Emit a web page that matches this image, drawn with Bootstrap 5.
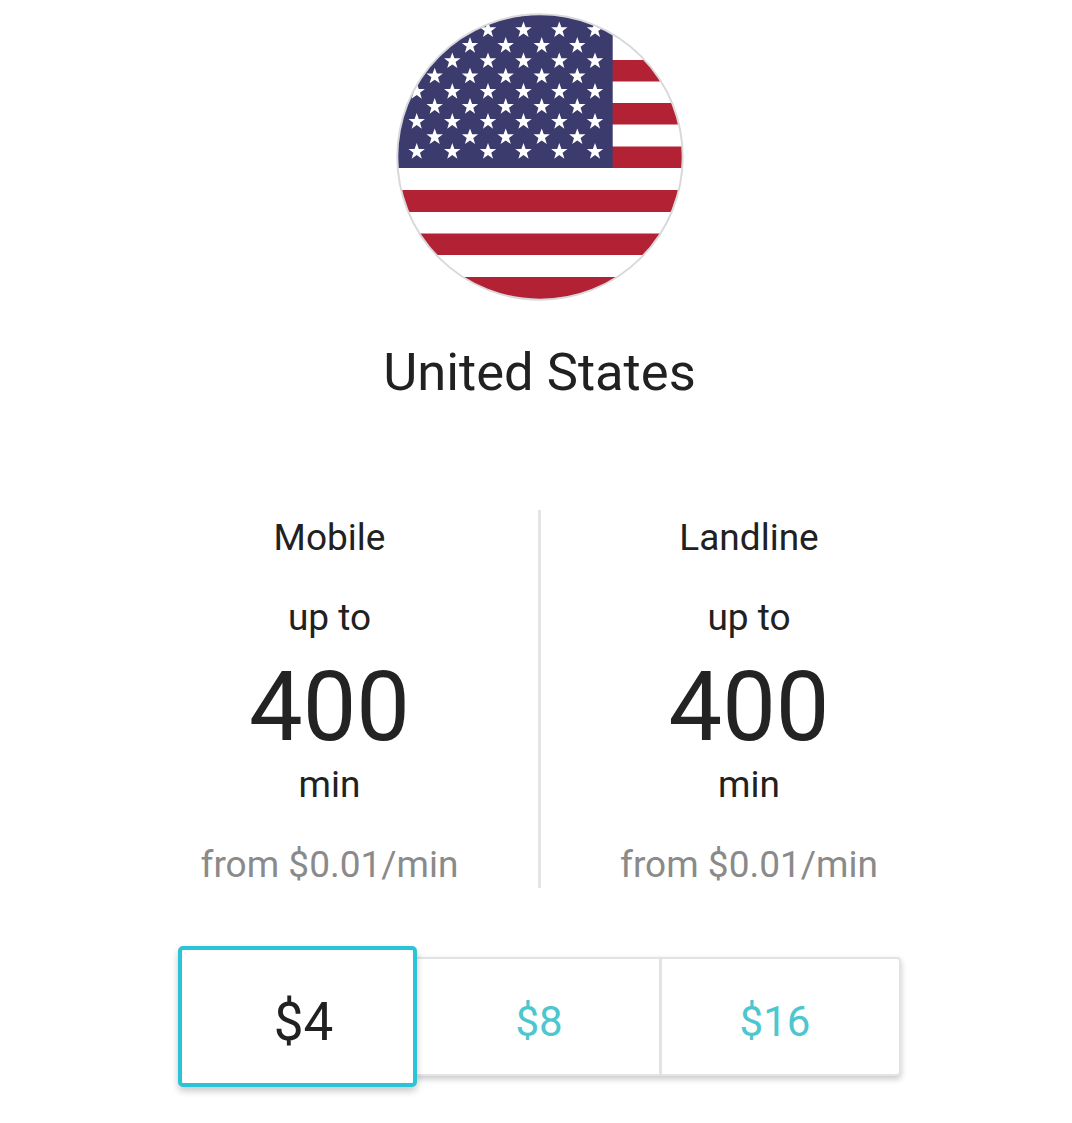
<!DOCTYPE html>
<html lang="en">
<head>
<meta charset="utf-8">
<title>United States</title>
<link href="https://cdn.jsdelivr.net/npm/bootstrap@5.3.0/dist/css/bootstrap.min.css" rel="stylesheet">
<style>
html,body{background:#fff;}
body{font-family:Roboto,"Liberation Sans",sans-serif;color:#212121;width:1072px;height:1123px;overflow:hidden;}
.flag-wrap{padding:13px 0 0 8px;height:301px;}
.flag-svg{display:block;width:288px;height:288px;filter:blur(.35px);}
.country-name{font-size:52.5px;line-height:60px;font-weight:400;margin:41px 0 0;padding-left:7px;}
.rates{margin:108px 0 0 121px;width:840px;height:378px;}
.rate-col{width:416px;flex:none;}
.rate-col-first{border-right:3px solid #e2e4e6;width:420px;}
.rate-type{font-size:37px;line-height:41px;margin-top:7px;}
.rate-upto{font-size:37px;line-height:40px;margin-top:40px;}
.rate-num{font-size:95.5px;line-height:108px;margin-top:15px;color:#232323;}
.rate-min{font-size:37px;line-height:41px;margin-top:3px;}
.rate-from{font-size:37px;line-height:42px;margin-top:39px;color:#8a8a8a;}
.amounts{margin:58px 0 0 178px;width:723px;height:141px;}
.amount-opt{width:239px;height:141px;font-size:53px;color:#212121;background:#fff;border:4.5px solid #2bc4d6;border-radius:5px;box-shadow:0 4px 7px rgba(0,0,0,.22);position:relative;z-index:1;padding:13px 1px 0 13px;flex:none;}
.amount-rest{height:119px;margin:11px 0 0 -2px;background:#fff;border:2px solid #e2e3e6;border-left:0;border-radius:0 4px 4px 0;box-shadow:0 3px 6px rgba(0,0,0,.22);flex:1;}
.amount-btn{flex:1 1 0;font-size:42px;color:#4cc6cf;padding-top:10px;}
.amount-btn+.amount-btn{border-left:3px solid #e2e3e6;padding-right:11px;}
.amount-first{flex:0 0 244px;padding-left:4px;}
</style>
</head>
<body>
<main>
<div class="flag-wrap d-flex justify-content-center">
<svg class="flag-svg" viewBox="396 13 288 288" xmlns="http://www.w3.org/2000/svg" role="img" aria-label="Flag of the United States">
<defs>
<clipPath id="disc"><circle cx="540" cy="157" r="142.5"/></clipPath>
<polygon id="st" fill="#fff" points="0,-8.6 2.1,-2.7 8.2,-2.7 3.3,1 5.1,7 0,3.4 -5.1,7 -3.3,1 -8.2,-2.7 -2.1,-2.7"/>
<g id="r6"><use href="#st" x="416.7"/><use href="#st" x="452.3"/><use href="#st" x="488"/><use href="#st" x="523.5"/><use href="#st" x="559.3"/><use href="#st" x="595"/></g>
<g id="r5"><use href="#st" x="434.7"/><use href="#st" x="470"/><use href="#st" x="505.7"/><use href="#st" x="541.7"/><use href="#st" x="577.3"/></g>
</defs>
<g clip-path="url(#disc)">
<rect x="390" y="10" width="300" height="300" fill="#fff"/>
<rect x="610" y="60" width="80" height="21.5" fill="#b22234"/>
<rect x="610" y="103" width="80" height="21.5" fill="#b22234"/>
<rect x="610" y="146.5" width="80" height="21.5" fill="#b22234"/>
<rect x="390" y="190" width="300" height="22" fill="#b22234"/>
<rect x="390" y="233.5" width="300" height="21.5" fill="#b22234"/>
<rect x="390" y="277" width="300" height="25" fill="#b22234"/>
<rect x="390" y="10" width="222.7" height="158" fill="#3c3b6e"/>
<use href="#r6" y="30"/><use href="#r5" y="45.7"/><use href="#r6" y="61"/><use href="#r5" y="76.3"/><use href="#r6" y="91.7"/><use href="#r5" y="106.7"/><use href="#r6" y="121.7"/><use href="#r5" y="137"/><use href="#r6" y="151.7"/>
</g>
<circle cx="540" cy="157" r="142.7" fill="none" stroke="#d9d9dc" stroke-width="2"/>
</svg>
</div>
<h1 class="country-name text-center">United States</h1>
<div class="rates d-flex">
<div class="rate-col rate-col-first text-center">
<div class="rate-type">Mobile</div>
<div class="rate-upto">up to</div>
<div class="rate-num">400</div>
<div class="rate-min">min</div>
<div class="rate-from">from $0.01/min</div>
</div>
<div class="rate-col text-center">
<div class="rate-type">Landline</div>
<div class="rate-upto">up to</div>
<div class="rate-num">400</div>
<div class="rate-min">min</div>
<div class="rate-from">from $0.01/min</div>
</div>
</div>
<div class="amounts d-flex align-items-start">
<div class="amount-opt d-flex align-items-center justify-content-center">$4</div>
<div class="amount-rest d-flex">
<div class="amount-btn amount-first d-flex align-items-center justify-content-center">$8</div>
<div class="amount-btn d-flex align-items-center justify-content-center">$16</div>
</div>
</div>
</main>
<script src="https://cdn.jsdelivr.net/npm/bootstrap@5.3.0/dist/js/bootstrap.bundle.min.js"></script>
</body>
</html>
